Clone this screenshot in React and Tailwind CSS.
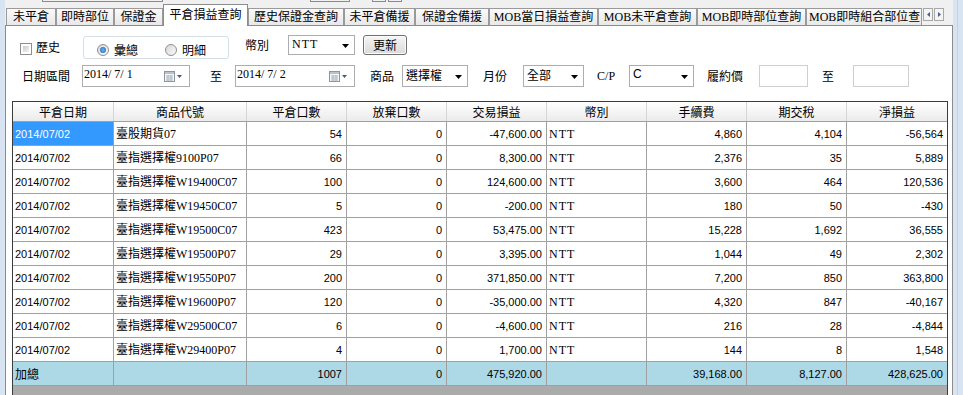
import React from "react";

const SANS = "[font-family:'Liberation_Sans','Noto_Sans_CJK_TC',sans-serif]";
const SERIF = "[font-family:'Liberation_Serif','Noto_Sans_CJK_TC',serif]";
const CJK = "[font-family:'Noto_Sans_CJK_TC','Liberation_Sans',sans-serif]";

const tabs = [
  { label: "未平倉", w: "w-[50px]" },
  { label: "即時部位", w: "w-[58px]" },
  { label: "保證金", w: "w-[49px]" },
  { label: "平倉損益查詢", w: "w-[85px]", active: true },
  { label: "歷史保證金查詢", w: "w-[96px]" },
  { label: "未平倉備援", w: "w-[71px]" },
  { label: "保證金備援", w: "w-[74px]" },
  { label: "MOB當日損益查詢", w: "w-[109px]" },
  { label: "MOB未平倉查詢", w: "w-[99px]" },
  { label: "MOB即時部位查詢", w: "w-[109px]" },
  { label: "MOB即時組合部位查", w: "w-[116px]", cut: true },
];

const cols = [
  { h: "平倉日期", w: "w-[101px] border-r", a: "justify-start pl-[2px]", f: SANS + " text-[11px]" },
  { h: "商品代號", w: "w-[133px] border-r", a: "justify-start pl-[2px]", f: SERIF + " text-[12px]" },
  { h: "平倉口數", w: "w-[100px] border-r", a: "justify-end pr-[4px]", f: SANS + " text-[11px]" },
  { h: "放棄口數", w: "w-[100px] border-r", a: "justify-end pr-[4px]", f: SANS + " text-[11px]" },
  { h: "交易損益", w: "w-[100px] border-r", a: "justify-end pr-[4px]", f: SANS + " text-[11px]" },
  { h: "幣別", w: "w-[100px] border-r", a: "justify-start pl-[2px]", f: SERIF + " text-[12px] tracking-[1px]" },
  { h: "手續費", w: "w-[100px] border-r", a: "justify-end pr-[4px]", f: SANS + " text-[11px]" },
  { h: "期交稅", w: "w-[100px] border-r", a: "justify-end pr-[4px]", f: SANS + " text-[11px]" },
  { h: "淨損益", w: "w-[100px]", a: "justify-end pr-[4px]", f: SANS + " text-[11px]" },
];

const rows = [
  ["2014/07/02", "臺股期貨07", "54", "0", "-47,600.00", "NTT", "4,860", "4,104", "-56,564"],
  ["2014/07/02", "臺指選擇權9100P07", "66", "0", "8,300.00", "NTT", "2,376", "35", "5,889"],
  ["2014/07/02", "臺指選擇權W19400C07", "100", "0", "124,600.00", "NTT", "3,600", "464", "120,536"],
  ["2014/07/02", "臺指選擇權W19450C07", "5", "0", "-200.00", "NTT", "180", "50", "-430"],
  ["2014/07/02", "臺指選擇權W19500C07", "423", "0", "53,475.00", "NTT", "15,228", "1,692", "36,555"],
  ["2014/07/02", "臺指選擇權W19500P07", "29", "0", "3,395.00", "NTT", "1,044", "49", "2,302"],
  ["2014/07/02", "臺指選擇權W19550P07", "200", "0", "371,850.00", "NTT", "7,200", "850", "363,800"],
  ["2014/07/02", "臺指選擇權W19600P07", "120", "0", "-35,000.00", "NTT", "4,320", "847", "-40,167"],
  ["2014/07/02", "臺指選擇權W29500C07", "6", "0", "-4,600.00", "NTT", "216", "28", "-4,844"],
  ["2014/07/02", "臺指選擇權W29400P07", "4", "0", "1,700.00", "NTT", "144", "8", "1,548"],
];

const total = ["加總", "", "1007", "0", "475,920.00", "", "39,168.00", "8,127.00", "428,625.00"];

function Arrow() {
  return (
    <svg width="7" height="4" viewBox="0 0 7 4" className="shrink-0">
      <path d="M0 0H7L3.5 4Z" fill="#000" />
    </svg>
  );
}

function Select({ w, text, font }) {
  return (
    <div className={`${w} h-full border border-[#abadb3] bg-white flex`}>
      <div className={`flex-1 pl-[3px] pt-[2px] leading-[13px] text-[12px] ${font}`}>{text}</div>
      <div className="self-center mr-[5px] mt-[1px]">
        <Arrow />
      </div>
    </div>
  );
}

function CalIcon() {
  return (
    <svg width="20" height="11" viewBox="0 0 20 11" className="shrink-0">
      <rect x="0.5" y="0.5" width="10" height="10" fill="#f4f6f8" stroke="#8c96a3" />
      <rect x="1" y="1" width="9" height="2" fill="#b9c3cf" />
      <path d="M2 5h7M2 7h7M2 9h7M4 4v6M7 4v6" stroke="#b0b8c2" strokeWidth="1" />
      <path d="M13 4H18L15.5 7Z" fill="#4a5b7c" />
    </svg>
  );
}

function DatePicker({ w, text }) {
  return (
    <div className={`${w} h-full border border-[#abadb3] bg-white flex`}>
      <div className={`flex-1 pl-[1px] pt-[2px] leading-[13px] text-[12px] whitespace-pre ${SERIF}`}>{text}</div>
      <div className="self-center mr-[5px] mt-[1px]">
        <CalIcon />
      </div>
    </div>
  );
}

function Radio({ checked }) {
  return (
    <div className="w-[12px] h-[12px] rounded-full border border-[#8e8f8f] bg-linear-to-br from-[#d8d8d8] to-[#fbfbfb] flex items-center justify-center shrink-0">
      {checked ? (
        <div className="w-[6px] h-[6px] rounded-full bg-radial from-[#6ab8f5] to-[#1a5fb4]" />
      ) : null}
    </div>
  );
}

function Label({ children, cls = "" }) {
  return <div className={`text-[12px] leading-[12px] whitespace-nowrap ${CJK} ${cls}`}>{children}</div>;
}

export default function App() {
  return (
    <div className={`w-[963px] h-[395px] flex bg-[#d9e4f2] overflow-hidden text-black ${SANS}`}>
      <div className="w-[5px] shrink-0" />
      <div className="w-[948px] shrink-0 flex flex-col">
        {/* header with tabs */}
        <div className="h-[25px] shrink-0 flex flex-col bg-[#f0f0f0] relative z-10">
          <div className="h-[4px] flex items-start">
            <div className="ml-[37px] w-[121px] h-[2px] border-b border-x border-[#8b8b8b]" />
            <div className="ml-[147px] w-[40px] h-[2px] border-b border-x border-[#8b8b8b]" />
            <div className="ml-[22px] w-[14px] h-[2px] border-b border-x border-[#8b8b8b]" />
            <div className="ml-[2px] w-[14px] h-[2px] border-b border-x border-[#8b8b8b]" />
          </div>
          <div className="h-[21px] flex items-end pl-[1px]">
            {tabs.map((t) =>
              t.active ? (
                <div
                  key={t.label}
                  className={`${t.w} h-[22px] -mb-px shrink-0 border border-b-0 border-[#8c8c8c] bg-white flex items-center justify-center pb-[3px] text-[12px] leading-[12px] whitespace-nowrap ${CJK}`}
                >
                  {t.label}
                </div>
              ) : (
                <div
                  key={t.label}
                  className={`${t.w} h-[17px] shrink-0 border border-b-0 border-[#9a9a9a] bg-linear-to-b from-[#fafafa] to-[#e8e8e8] flex items-center overflow-hidden text-[12px] leading-[12px] whitespace-nowrap ${SERIF} ${t.cut ? "justify-start pl-[2px]" : "justify-center"}`}
                >
                  {t.label}
                </div>
              )
            )}
            <div className="self-end mb-[4px] ml-[1px] flex gap-[1px]">
              <div className="w-[10px] h-[13px] border border-[#a8a8a8] bg-[#f4f4f4] flex items-center justify-center">
                <svg width="3" height="5" viewBox="0 0 3 5"><path d="M3 0V5L0 2.5Z" fill="#4d5f85" /></svg>
              </div>
              <div className="w-[10px] h-[13px] border border-[#a8a8a8] bg-[#f4f4f4] flex items-center justify-center">
                <svg width="3" height="5" viewBox="0 0 3 5"><path d="M0 0V5L3 2.5Z" fill="#4d5f85" /></svg>
              </div>
            </div>
          </div>
        </div>

        {/* panel */}
        <div className="flex-1 min-h-0 border-l border-t border-r border-[#8c8c8c] bg-white flex flex-col">
          {/* row 1 */}
          <div className="h-[24px] mt-[9px] flex items-start shrink-0">
            <div className="ml-[14px] mt-[8px] w-[12px] h-[12px] border border-[#8e8f8f] p-[2px] bg-white shrink-0">
              <div className="w-full h-full bg-linear-to-br from-[#c9ccd1] to-[#f3f3f3]" />
            </div>
            <Label cls="ml-[4px] mt-[6px]">歷史</Label>
            <div className="ml-[23px] mt-[1px] w-[146px] h-[23px] border border-[#d5dfe5] rounded-[3px] flex items-center pt-[4px] pl-[13px] shrink-0">
              <Radio checked />
              <Label cls="ml-[5px]">彙總</Label>
              <div className="ml-[27px]">
                <Radio />
              </div>
              <Label cls="ml-[5px]">明細</Label>
            </div>
            <Label cls="ml-[16px] mt-[4px]">幣別</Label>
            <div className="ml-[19px] h-[20px] flex">
              <Select w="w-[67px]" text="NTT" font={SERIF + " tracking-[1px]"} />
            </div>
            <div className="ml-[8px] w-[44px] h-[20px] rounded-[3px] border border-[#707070] bg-linear-to-b from-[#f6f6f6] to-[#dadada] flex items-center justify-center shadow-[inset_0_0_0_1px_#fcfcfc]">
              <Label>更新</Label>
            </div>
          </div>

          {/* row 2 */}
          <div className="h-[22px] mt-[6px] flex items-center shrink-0">
            <Label cls="ml-[16px]">日期區間</Label>
            <div className="ml-[12px] h-full flex">
              <DatePicker w="w-[108px]" text="2014/ 7/ 1" />
            </div>
            <Label cls="ml-[20px]">至</Label>
            <div className="ml-[13px] h-full flex">
              <DatePicker w="w-[120px]" text="2014/ 7/ 2" />
            </div>
            <Label cls="ml-[15px]">商品</Label>
            <div className="ml-[8px] h-full flex">
              <Select w="w-[66px]" text="選擇權" font={CJK} />
            </div>
            <Label cls="ml-[15px]">月份</Label>
            <div className="ml-[16px] h-full flex">
              <Select w="w-[61px]" text="全部" font={CJK} />
            </div>
            <div className={`ml-[13px] text-[12px] leading-[12px] ${SERIF}`}>C/P</div>
            <div className="ml-[14px] h-full flex">
              <Select w="w-[65px]" text="C" font={SANS} />
            </div>
            <Label cls="ml-[13px]">履約價</Label>
            <div className="ml-[16px] w-[49px] h-full border border-[#cfcfcf] bg-white" />
            <Label cls="ml-[14px]">至</Label>
            <div className="ml-[19px] w-[56px] h-full border border-[#cfcfcf] bg-white" />
          </div>

          {/* table */}
          <div className="mt-[14px] ml-[6px] mr-[4px] flex-1 min-h-0 overflow-hidden bg-[#ababab] border-l border-t border-r border-[#3c3c3c]">
            <div className="h-[20px] flex border-b border-[#a0a0a0] bg-linear-to-b from-[#ffffff] to-[#ebebeb]">
              {cols.map((c) => (
                <div
                  key={c.h}
                  className={`${c.w} border-[#d5d5d5] h-full flex items-center justify-center text-[12px] leading-[12px] ${CJK}`}
                >
                  {c.h}
                </div>
              ))}
            </div>
            {rows.map((r, i) => (
              <div key={i} className="h-[24px] flex border-b border-[#a0a0a0] bg-white">
                {r.map((v, j) => (
                  <div
                    key={j}
                    className={`${cols[j].w} border-[#a0a0a0] h-full flex items-center leading-[12px] whitespace-nowrap ${cols[j].a} ${cols[j].f} ${i === 0 && j === 0 ? "bg-[#3399ff] text-white" : ""}`}
                  >
                    {v}
                  </div>
                ))}
              </div>
            ))}
            <div className="h-[24px] flex border-b border-[#a0a0a0] bg-[#add8e6]">
              {total.map((v, j) => (
                <div
                  key={j}
                  className={`${cols[j].w} border-[#a0a0a0] h-full flex items-center leading-[12px] whitespace-nowrap ${cols[j].a} ${j === 0 ? CJK + " text-[12px]" : SANS + " text-[11px]"}`}
                >
                  {v}
                </div>
              ))}
            </div>
          </div>
        </div>
      </div>
      <div className="flex-1 flex">
        <div className="w-[4px]" />
        <div className="w-px bg-[#c5d2e3]" />
      </div>
    </div>
  );
}
